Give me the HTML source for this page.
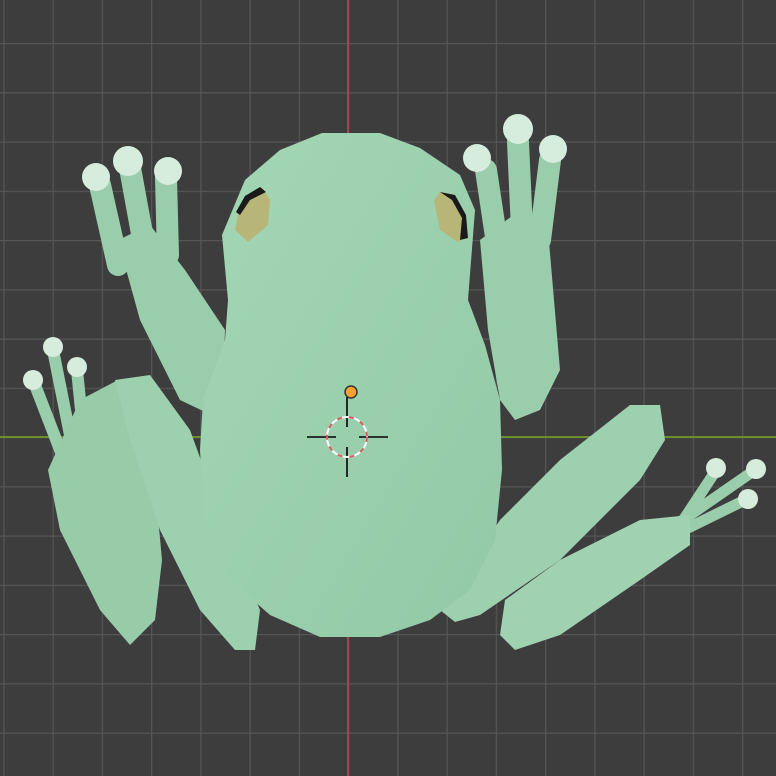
<!DOCTYPE html><html><head><style>html,body{margin:0;padding:0;background:#3d3d3d}svg{display:block}</style></head><body>
<svg width="776" height="776" viewBox="0 0 776 776" xmlns="http://www.w3.org/2000/svg">
<defs>
<pattern id="g" x="3.25" y="43" width="49.25" height="49.25" patternUnits="userSpaceOnUse">
<path d="M0.5 0V49.25M0 0.5H49.25" stroke="#555" stroke-width="1.6" fill="none"/>
</pattern>
<linearGradient id="bd" x1="0" y1="0" x2="1" y2="1"><stop offset="0" stop-color="#a3d6b5"/><stop offset="1" stop-color="#93c9a6"/></linearGradient>
</defs>
<rect width="776" height="776" fill="#3d3d3d"/>
<rect width="776" height="776" fill="url(#g)"/>
<line x1="348" y1="0" x2="348" y2="776" stroke="#a04552" stroke-width="2"/>
<line x1="0" y1="437" x2="776" y2="437" stroke="#6e8c2c" stroke-width="2"/>
<g fill="#9acdab" stroke="none">
<!-- left toes back -->
<g stroke="#9acdab" stroke-width="12" stroke-linecap="round"><line x1="35" y1="385" x2="62" y2="455"/><line x1="53" y1="350" x2="72" y2="445"/><line x1="77" y1="370" x2="84" y2="440"/></g>
<polygon points="48,470 80,400 118,380 150,430 162,560 155,620 130,645 100,610 60,530" fill="#98cca9"/>
<polygon points="115,380 150,375 190,430 230,540 260,610 255,650 235,650 200,610 160,530 130,440" fill="#9dd0ae"/>
<!-- left arm -->
<g stroke="#9acdab" stroke-width="22" stroke-linecap="round"><line x1="100" y1="185" x2="118" y2="265"/><line x1="130" y1="168" x2="145" y2="250"/><line x1="166" y1="178" x2="168" y2="255"/></g>
<polygon points="118,240 150,225 185,270 225,330 222,420 180,400 140,320"/>
<!-- right arm -->
<g stroke="#9acdab" stroke-width="22" stroke-linecap="round"><line x1="486" y1="170" x2="498" y2="250"/><line x1="518" y1="142" x2="522" y2="230"/><line x1="550" y1="160" x2="540" y2="240"/></g>
<polygon points="480,240 520,210 548,230 560,370 540,410 515,420 500,400 488,330"/>
<!-- right legs -->
<polygon points="440,610 500,520 560,460 630,405 660,405 665,440 640,480 560,560 480,615 455,622" fill="#9dd0ae"/>
<g stroke="#9acdab" stroke-width="11" stroke-linecap="round"><line x1="680" y1="525" x2="715" y2="472"/><line x1="680" y1="522" x2="752" y2="472"/><line x1="680" y1="532" x2="745" y2="500"/></g>
<polygon points="505,600 560,560 640,520 690,515 690,545 640,580 560,635 515,650 500,635" fill="#a0d2b1"/>
<!-- body -->
<polygon fill="url(#bd)" points="222,235 245,180 280,150 322,133 380,133 420,148 460,175 475,210 468,300 485,345 500,400 502,470 495,540 470,590 430,620 380,637 320,637 270,615 230,580 205,530 200,450 203,400 225,340 228,300"/>
</g>
<!-- toe tips -->
<g fill="#d6ecdc">
<circle cx="96" cy="177" r="14"/><circle cx="128" cy="161" r="15"/><circle cx="168" cy="171" r="14"/>
<circle cx="477" cy="158" r="14"/><circle cx="518" cy="129" r="15"/><circle cx="553" cy="149" r="14"/>
<circle cx="33" cy="380" r="10"/><circle cx="53" cy="347" r="10"/><circle cx="77" cy="367" r="10"/>
<circle cx="716" cy="468" r="10"/><circle cx="756" cy="469" r="10"/><circle cx="748" cy="499" r="10"/>
</g>
<!-- eyes -->
<polygon points="240,205 262,187 270,200 268,225 248,242 235,230" fill="#b8b579"/>
<polygon points="236,212 245,196 260,187 266,192 250,200 240,215" fill="#1a1a1a"/>
<polygon points="434,200 440,192 455,195 465,215 466,235 458,242 440,230" fill="#b8b579"/>
<polygon points="440,192 455,195 466,215 468,238 460,240 462,218 452,200" fill="#1a1a1a"/>
<!-- cursor -->
<g stroke="#000" stroke-width="1.6"><line x1="307" y1="437" x2="336" y2="437"/><line x1="359" y1="437" x2="388" y2="437"/><line x1="347" y1="397" x2="347" y2="427"/><line x1="347" y1="447" x2="347" y2="477"/></g>
<circle cx="347" cy="437" r="20" fill="none" stroke="#fff" stroke-width="2"/>
<circle cx="347" cy="437" r="20" fill="none" stroke="#d06060" stroke-width="2" stroke-dasharray="5 7"/>
<circle cx="351" cy="392" r="6" fill="#f5a030" stroke="#333" stroke-width="1.5"/>
</svg>
</body></html>
